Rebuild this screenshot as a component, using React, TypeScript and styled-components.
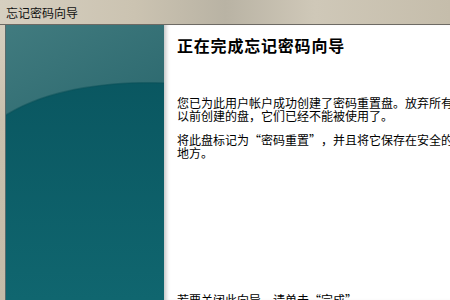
import styled, { createGlobalStyle } from 'styled-components';

/* —— page reset —— */
const Global = createGlobalStyle`
  html, body { margin: 0; padding: 0; overflow: hidden; }
  body { background: #cfc7b6; }
`;

const cjk = `"Noto Sans CJK SC", "Noto Sans", sans-serif`;

/* —— window frame —— */
const Window = styled.div`
  width: 450px;
  height: 300px;
  display: flex;
  flex-direction: column;
  overflow: hidden;
  background: linear-gradient(180deg, #d9d2c3 0%, #c9c0ad 40%, #c4bba8 100%);
  font-family: ${cjk};
`;

const TitleBar = styled.div`
  height: 24px;
  flex: none;
  display: flex;
  align-items: center;
  padding-left: 6px;
  font-size: 12px;
  color: #111;
  background: linear-gradient(90deg, #d6cfc0 0%, #cbc3b1 30%, #b9b3a4 50%, #cfc8b8 70%, #c5bdab 100%);
  border-bottom: 1px solid #6d6a64;
`;

const Client = styled.div`
  flex: 1;
  min-height: 0;
  display: flex;
  padding-left: 5px;
`;

/* —— left artwork —— */
const Side = styled.div`
  width: 158px;
  flex: none;
  border-left: 1px solid #5a6a6a;
  svg { display: block; width: 100%; height: 100%; }
`;

/* —— right content —— */
const Content = styled.div`
  flex: 1;
  display: flex;
  flex-direction: column;
  background: #fff;
  padding: 10px 0 0 13px;
  box-shadow: inset 5px 0 4px -3px rgba(0, 0, 0, .25);
  white-space: nowrap;
  overflow: hidden;
`;

const Heading = styled.h1`
  margin: 0;
  font-size: 16px;
  line-height: 20px;
  font-weight: 700;
  letter-spacing: .8px;
  color: #000;
`;

const Para = styled.p<{ $gap: number }>`
  margin: ${p => p.$gap}px 0 0;
  font-size: 12px;
  line-height: 13px;
  color: #000;
`;

const Footer = styled.p`
  margin: auto 0 0;
  font-size: 12px;
  line-height: 13px;
  color: #000;
  transform: translateY(6px);
`;

/* full-width cell for curly quotes, as the system font draws them */
const Quote = styled.span<{ $open?: boolean }>`
  display: inline-block;
  width: 12px;
  text-align: ${p => (p.$open ? 'right' : 'left')};
`;

function Quoted({ children }: { children: string }) {
  return (
    <>
      <Quote $open>“</Quote>{children}<Quote>”</Quote>
    </>
  );
}

function Artwork() {
  return (
    <svg viewBox="0 0 158 275" preserveAspectRatio="none">
      <defs>
        <linearGradient id="top" x1="0" y1="0" x2="1" y2="1">
          <stop offset="0" stopColor="#417b7f" />
          <stop offset="1" stopColor="#2b686e" />
        </linearGradient>
        <linearGradient id="low" x1="0" y1="0" x2="0" y2="1">
          <stop offset="0" stopColor="#08535d" />
          <stop offset="1" stopColor="#10666f" />
        </linearGradient>
      </defs>
      <rect width="158" height="275" fill="url(#low)" />
      <path d="M0 0 H158 V58 C110 56 45 62 0 90 Z" fill="url(#top)" />
      <path d="M0 90 C45 62 110 56 158 58" fill="none" stroke="#0a4f57" strokeOpacity=".5" strokeWidth="1.5" />
    </svg>
  );
}

export default function App() {
  return (
    <>
      <Global />
      <Window>
        <TitleBar>忘记密码向导</TitleBar>
        <Client>
          <Side><Artwork /></Side>
          <Content>
            <Heading>正在完成忘记密码向导</Heading>
            <Para $gap={41}>
              您已为此用户帐户成功创建了密码重置盘。放弃所有<br />
              以前创建的盘，它们已经不能被使用了。
            </Para>
            <Para $gap={11}>
              将此盘标记为<Quoted>密码重置</Quoted>，并且将它保存在安全的<br />
              地方。
            </Para>
            <Footer>若要关闭此向导，请单击<Quoted>完成</Quoted>。</Footer>
          </Content>
        </Client>
      </Window>
    </>
  );
}
